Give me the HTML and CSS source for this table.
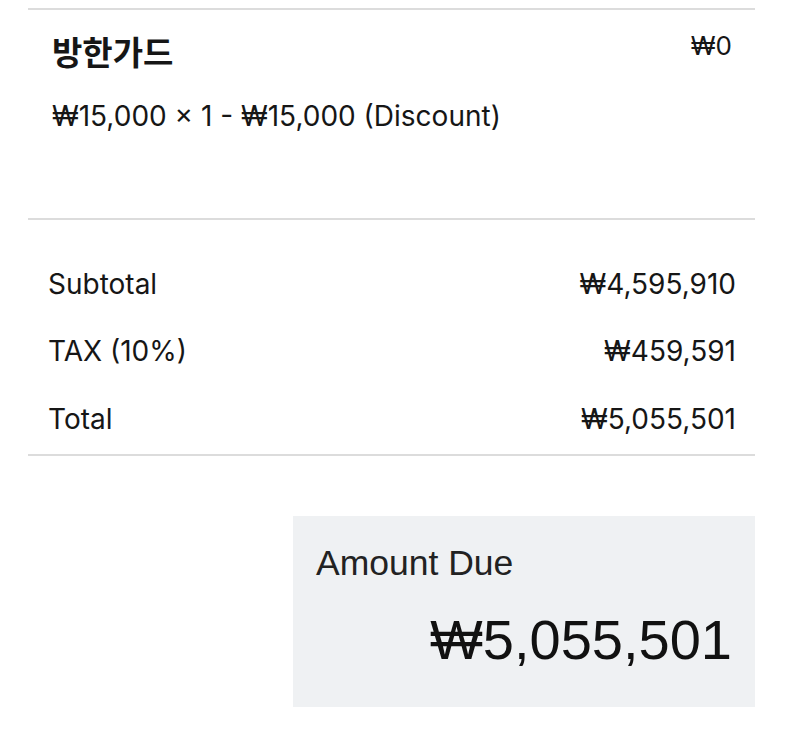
FILE: index.html
```html
<!DOCTYPE html>
<html lang="ko">
<head>
<meta charset="utf-8">
<title>Invoice</title>
<link rel="stylesheet" href="styles.css">
</head>
<body>
<div class="invoice">
  <section class="item">
    <div class="item-head">
      <h2 class="item-title">방한가드</h2>
      <span class="item-price">₩0</span>
    </div>
    <p class="item-desc">₩15,000 × 1 - ₩15,000 (Discount)</p>
  </section>
  <section class="summary">
    <div class="row"><span>Subtotal</span><span>₩4,595,910</span></div>
    <div class="row"><span>TAX (10%)</span><span>₩459,591</span></div>
    <div class="row"><span>Total</span><span>₩5,055,501</span></div>
  </section>
  <div class="due-wrap">
    <div class="due">
      <div class="due-label">Amount Due</div>
      <div class="due-amount">₩5,055,501</div>
    </div>
  </div>
</div>
</body>
</html>
```

FILE: styles.css
```css
html, body {
  margin: 0;
  padding: 0;
  background: #ffffff;
}
body {
  font-family: Inter, "Noto Sans CJK KR", sans-serif;
  color: #161616;
}
.invoice {
  padding: 8px 30px 0 28px;
}
.item {
  border-top: 2px solid #dcdcdc;
  height: 210px;
  box-sizing: border-box;
  padding: 16px 23px 0 24px;
}
.item-head {
  display: flex;
  justify-content: space-between;
  align-items: flex-start;
}
.item-title {
  margin: 0;
  font-family: "Noto Sans CJK KR", sans-serif;
  font-size: 33px;
  font-weight: 700;
  line-height: 50px;
}
.item-price {
  font-size: 26px;
  line-height: 40px;
  font-weight: 400;
}
.item-desc {
  margin: 22px 0 0 0;
  font-size: 28px;
  line-height: 36px;
  font-weight: 400;
}
.summary {
  border-top: 2px solid #dcdcdc;
  border-bottom: 2px solid #dcdcdc;
  padding: 30px 19px 1px 20px;
}
.row {
  display: flex;
  justify-content: space-between;
  align-items: center;
  height: 67.5px;
  font-size: 28px;
}
.due-wrap {
  display: flex;
  justify-content: flex-end;
  margin-top: 60px;
}
.due {
  width: 462px;
  height: 191px;
  box-sizing: border-box;
  background: #eff1f3;
  padding: 26px 23px 0 23px;
}
.due-label {
  font-family: "Liberation Sans", Arial, sans-serif;
  font-size: 35.5px;
  line-height: 42px;
  color: #222222;
}
.due-amount {
  font-family: "Liberation Sans", Arial, sans-serif;
  text-align: right;
  font-size: 56px;
  line-height: 66px;
  margin-top: 23px;
  color: #111111;
}
```
